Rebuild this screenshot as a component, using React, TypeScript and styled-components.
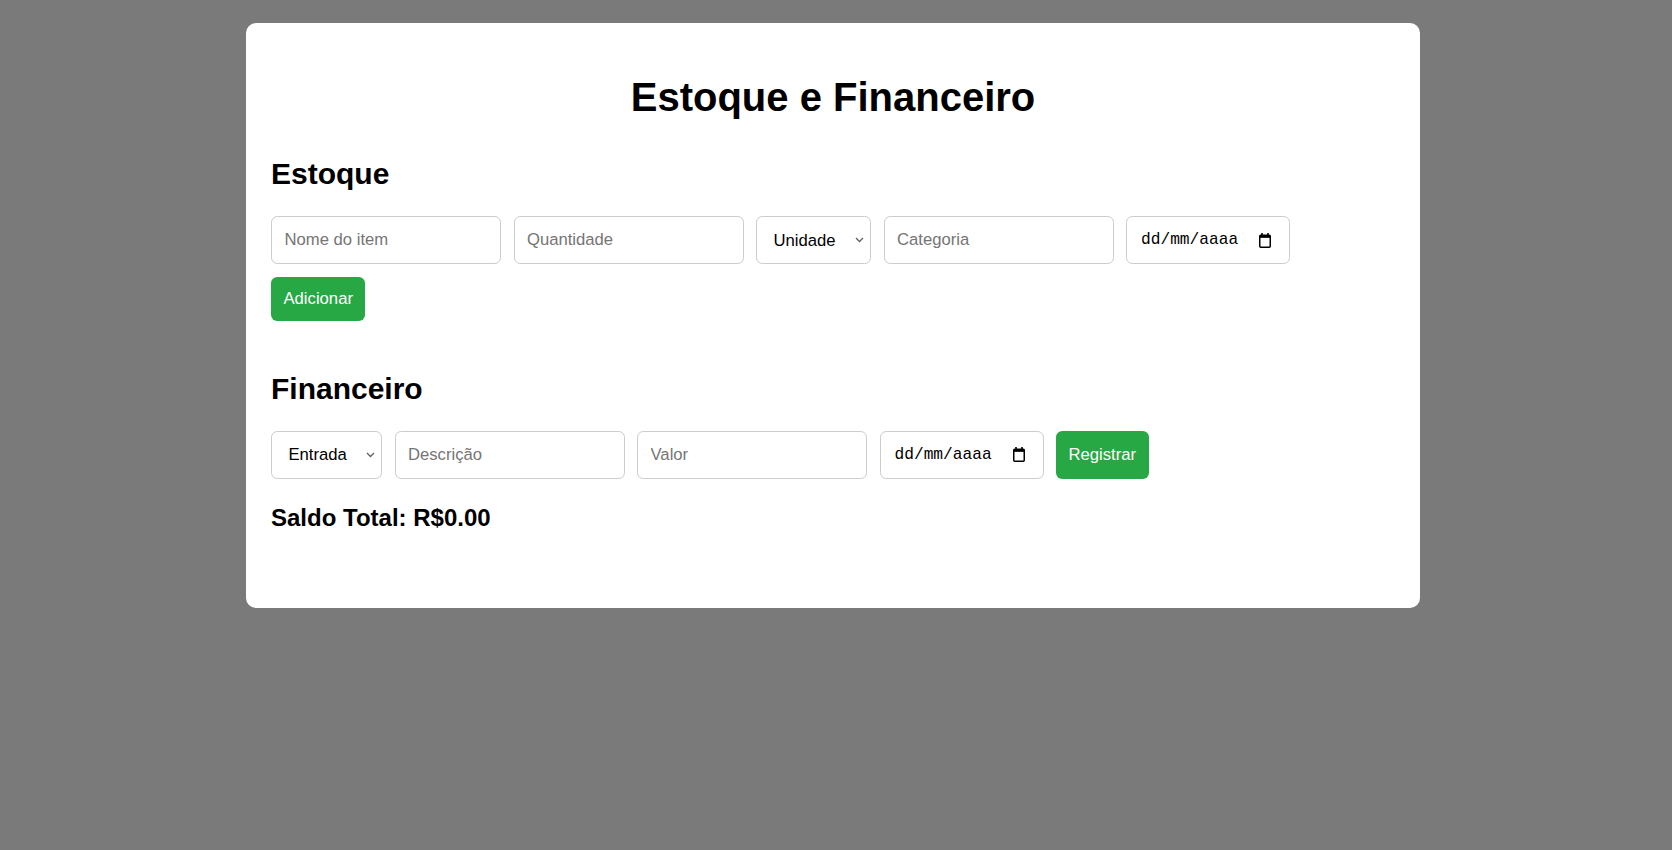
import React from "react";
import styled, { createGlobalStyle } from "styled-components";

const GlobalStyle = createGlobalStyle`
  html, body {
    margin: 0;
    padding: 0;
    background: #7a7a7a;
    min-height: 100vh;
    font-family: "Liberation Sans", Arial, sans-serif;
    color: #000;
  }
  #root {
    min-height: 100vh;
    padding-top: 23px;
    box-sizing: border-box;
  }
`;

const Card = styled.main`
  margin: 0 0 0 246px;
  width: 1174px;
  box-sizing: border-box;
  padding: 25px;
  background: #ffffff;
  border-radius: 10px;
`;

const Title = styled.h1`
  margin: 26px 0 0;
  font-size: 40px;
  line-height: 46px;
  font-weight: 700;
  text-align: center;
`;

const SectionTitle = styled.h2<{ $top: number }>`
  margin: ${(p) => p.$top}px 0 25px;
  font-size: 30px;
  line-height: 35px;
  font-weight: 700;
`;

const Stack = styled.div`
  display: flex;
  flex-direction: column;
  align-items: flex-start;
  gap: 12.5px;
`;

const Row = styled.div`
  display: flex;
  align-items: stretch;
  gap: 12.5px;
`;

const TextInput = styled.input<{ $w: number }>`
  width: ${(p) => p.$w}px;
  height: 48px;
  box-sizing: border-box;
  padding: 0 12.5px;
  border: 1px solid #cccccc;
  border-radius: 6.25px;
  font-family: "Liberation Sans", Arial, sans-serif;
  font-size: 16.67px;
  color: #000;
  background: #fff;
  outline: none;
  &::placeholder {
    color: #757575;
  }
`;

const SelectWrap = styled.div<{ $w: number }>`
  position: relative;
  width: ${(p) => p.$w}px;
  height: 48px;
`;

const Select = styled.select`
  appearance: none;
  -webkit-appearance: none;
  width: 100%;
  height: 100%;
  box-sizing: border-box;
  padding: 0 24px 0 16.5px;
  border: 1px solid #cccccc;
  border-radius: 6.25px;
  background: #fff;
  font-family: "Liberation Sans", Arial, sans-serif;
  font-size: 16.67px;
  color: #000;
  outline: none;
`;

const Chevron = styled.svg`
  position: absolute;
  right: 7px;
  top: 50%;
  transform: translateY(-50%);
  pointer-events: none;
`;

const DateField = styled.div<{ $w: number }>`
  width: ${(p) => p.$w}px;
  height: 48px;
  box-sizing: border-box;
  display: flex;
  align-items: center;
  justify-content: space-between;
  padding: 0 18px 0 14px;
  border: 1px solid #cccccc;
  border-radius: 6.25px;
  background: #fff;
  font-family: "Liberation Mono", "DejaVu Sans Mono", monospace;
  font-size: 16.2px;
  color: #000;
`;

const Button = styled.button`
  padding: 12.5px;
  border: none;
  border-radius: 6.25px;
  background: #28a745;
  color: #fff;
  font-family: "Liberation Sans", Arial, sans-serif;
  font-size: 16.67px;
  line-height: 19px;
  cursor: pointer;
`;

const Balance = styled.h3`
  margin: 25px 0 51px;
  font-size: 24px;
  line-height: 28px;
  font-weight: 700;
`;

function SelectBox({ w, options }: { w: number; options: string[] }) {
  return (
    <SelectWrap $w={w}>
      <Select defaultValue={options[0]}>
        {options.map((o) => (
          <option key={o}>{o}</option>
        ))}
      </Select>
      <Chevron width="9" height="6" viewBox="0 0 9 6">
        <path d="M1 1l3.5 3.5L8 1" fill="none" stroke="#5f5f5f" strokeWidth="1.3" />
      </Chevron>
    </SelectWrap>
  );
}

function CalendarIcon() {
  return (
    <svg width="12" height="15" viewBox="0 0 12 15">
      <rect x="2.2" y="0" width="1.6" height="3" fill="#000" />
      <rect x="8.2" y="0" width="1.6" height="3" fill="#000" />
      <rect x="0.75" y="2.25" width="10.5" height="12" rx="1" fill="none" stroke="#000" strokeWidth="1.5" />
      <rect x="0.75" y="2.25" width="10.5" height="2.6" fill="#000" />
    </svg>
  );
}

function DateInput({ w }: { w: number }) {
  return (
    <DateField $w={w}>
      <span>dd/mm/aaaa</span>
      <CalendarIcon />
    </DateField>
  );
}

export default function App() {
  return (
    <>
      <GlobalStyle />
      <Card>
        <Title>Estoque e Financeiro</Title>

        <SectionTitle $top={36}>Estoque</SectionTitle>
        <Stack>
          <Row>
            <TextInput $w={230} placeholder="Nome do item" />
            <TextInput $w={230} placeholder="Quantidade" />
            <SelectBox w={115} options={["Unidade", "Kg", "Litro"]} />
            <TextInput $w={230} placeholder="Categoria" />
            <DateInput w={164} />
          </Row>
          <Button>Adicionar</Button>
        </Stack>

        <SectionTitle $top={50}>Financeiro</SectionTitle>
        <Row>
          <SelectBox w={111} options={["Entrada", "Saída"]} />
          <TextInput $w={230} placeholder="Descrição" />
          <TextInput $w={230} placeholder="Valor" />
          <DateInput w={164} />
          <Button>Registrar</Button>
        </Row>

        <Balance>Saldo Total: R$0.00</Balance>
      </Card>
    </>
  );
}
